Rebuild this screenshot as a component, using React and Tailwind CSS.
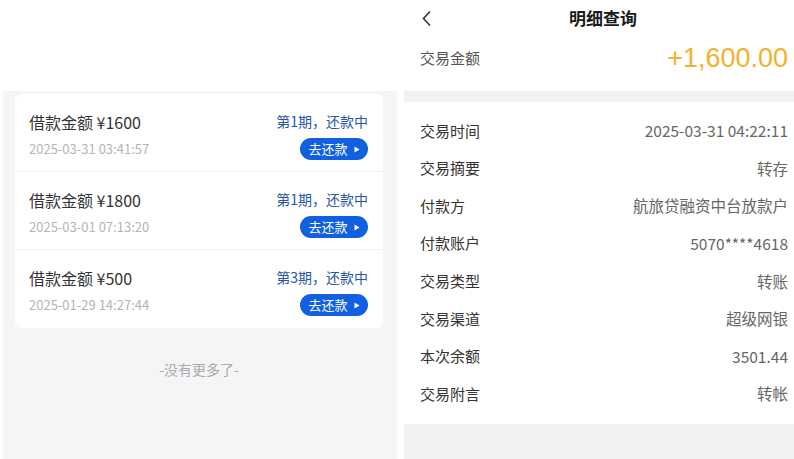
import React from "react";

const loans = [
  { amount: "¥1600", date: "2025-03-31 03:41:57", stage: "第1期，还款中" },
  { amount: "¥1800", date: "2025-03-01 07:13:20", stage: "第1期，还款中" },
  { amount: "¥500", date: "2025-01-29 14:27:44", stage: "第3期，还款中" },
];

const details = [
  { label: "交易时间", value: "2025-03-31 04:22:11" },
  { label: "交易摘要", value: "转存" },
  { label: "付款方", value: "航旅贷融资中台放款户" },
  { label: "付款账户", value: "5070****4618" },
  { label: "交易类型", value: "转账" },
  { label: "交易渠道", value: "超级网银" },
  { label: "本次余额", value: "3501.44" },
  { label: "交易附言", value: "转帐" },
];

const font = { fontFamily: '"Noto Sans CJK SC", "Noto Sans", sans-serif' };

const App = () => {
  return (
    <div className="w-[794px] h-[459px] bg-white flex overflow-hidden" style={font}>
      {/* Left: loan list */}
      <div className="ml-[3px] w-[394px] flex flex-col">
        <div className="h-[91px] bg-white"></div>
        <div className="flex-1 bg-[#f4f5f7] pl-[12px] pr-[14px] pt-[3px]">
          <div className="bg-white rounded-md overflow-hidden">
            {loans.map((row, i) => (
              <div
                key={i}
                className={
                  "h-[78px] pl-[14px] pr-[15px] pt-[17px] flex justify-between" +
                  (i < loans.length - 1 ? " border-b border-[#f1f2f4]" : "")
                }
              >
                <div className="flex flex-col">
                  <p className="text-[16px] leading-[22px] text-[#333]">
                    借款金额 {row.amount}
                  </p>
                  <p className="mt-[7px] text-[13px] leading-[18px] text-[#b4b4b4]">
                    {row.date}
                  </p>
                </div>
                <div className="flex flex-col items-end">
                  <p className="text-[14px] leading-[20px] text-[#2756a6]">{row.stage}</p>
                  <button className="mt-[7px] h-[22px] w-[68px] rounded-full bg-[#1060e0] text-white text-[13px] flex items-center justify-center gap-[6px]">
                    去还款
                    <svg width="6" height="7" viewBox="0 0 6 7">
                      <path d="M0.5 0.5 L5.5 3.5 L0.5 6.5 Z" fill="#fff" />
                    </svg>
                  </button>
                </div>
              </div>
            ))}
          </div>
          <p className="mt-[31px] text-center text-[14px] leading-[20px] text-[#aaaaaa]">
            -没有更多了-
          </p>
        </div>
      </div>

      {/* Right: transaction detail */}
      <div className="ml-[7px] w-[390px] flex flex-col">
        <div className="h-[36px] relative flex items-center justify-center">
          <svg
            className="absolute left-[17px] top-[10px]"
            width="12"
            height="17"
            viewBox="0 0 12 17"
          >
            <path d="M9 1.5 L2.5 8.5 L9 15.5" fill="none" stroke="#333" strokeWidth="1.6" />
          </svg>
          <p className="text-[17px] font-bold text-[#1a1a1a] ml-[8px]">明细查询</p>
        </div>
        <div className="h-[44px] pl-[16px] pr-[6px] flex items-center justify-between">
          <p className="text-[15px] text-[#555]">交易金额</p>
          <p
            className="text-[27px] text-[#f2b12e]"
            style={{ fontFamily: '"Liberation Sans", Arial, sans-serif' }}
          >
            +1,600.00
          </p>
        </div>
        <div className="mt-[11px] h-[11px] bg-[#f2f2f2]"></div>
        <div className="pt-[10px] pb-[11px]">
          {details.map((d, i) => (
            <div
              key={i}
              className="h-[37.6px] pl-[16px] pr-[6px] flex items-center justify-between"
            >
              <p className="text-[15px] text-[#333]">{d.label}</p>
              <p className="text-[15.5px] text-[#666]">{d.value}</p>
            </div>
          ))}
        </div>
        <div className="flex-1 bg-[#f2f2f2]"></div>
      </div>
    </div>
  );
};

export default App;
